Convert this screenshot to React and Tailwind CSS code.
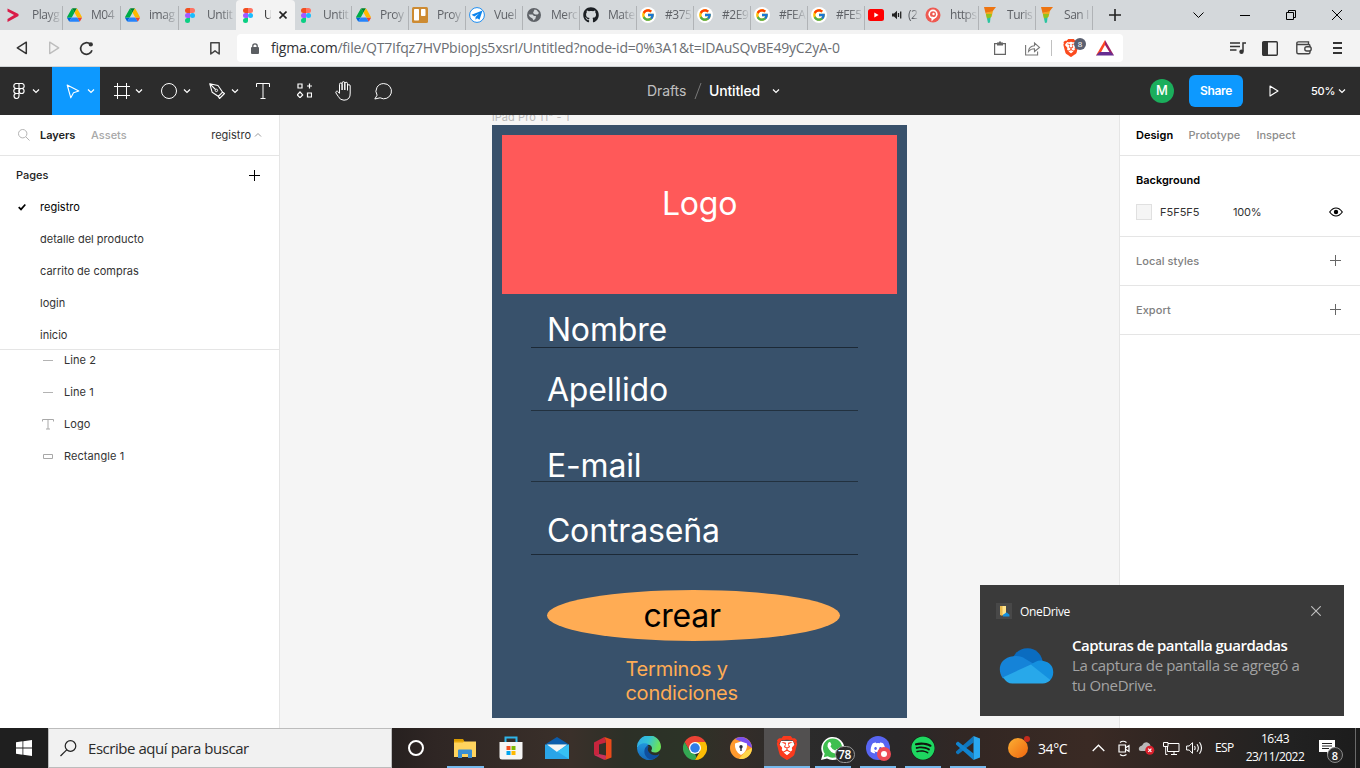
import React from "react";
import { FcGoogle } from "react-icons/fc";
import { FaGithub, FaSpotify, FaDiscord } from "react-icons/fa6";
import { SiBrave } from "react-icons/si";

/* ---------- small drawing helper ---------- */
function Svg({ w, h, className = "", children, box }) {
  return (
    <svg
      width={w}
      height={h}
      viewBox={box || `0 0 ${w} ${h}`}
      fill="none"
      stroke="none"
      className={"shrink-0 " + className}
    >
      {children}
    </svg>
  );
}

function Chevron({ className = "" }) {
  return (
    <Svg w={8} h={8} className={className}>
      <path d="M1 2.500 4 5.500 7 2.500" stroke="currentColor" strokeWidth="1.200" />
    </Svg>
  );
}

function Plus({ className = "" }) {
  return (
    <Svg w={11} h={11} className={className}>
      <path d="M5.500 0v11M0 5.500h11" stroke="currentColor" />
    </Svg>
  );
}

/* ---------- favicons ---------- */
const Platzi = () => (
  <Svg w={16} h={16}>
    <path d="M2.500 1.500v3l6.500 3.500-6.500 4v3l11-6V7z" fill="#d91c48" />
  </Svg>
);
const Drive = () => (
  <Svg w={15} h={14} box="0 0 87.3 78">
    <path fill="#0066da" d="m6.6 66.85 3.85 6.65c.8 1.4 1.95 2.5 3.3 3.3l13.75-23.8h-27.5c0 1.55.4 3.1 1.2 4.5z" />
    <path fill="#00ac47" d="m43.65 25-13.75-23.8c-1.35.8-2.5 1.9-3.3 3.3l-25.4 44a9.06 9.06 0 0 0-1.2 4.5h27.5z" />
    <path fill="#ea4335" d="m73.55 76.8c1.35-.8 2.5-1.9 3.3-3.3l1.6-2.75 7.65-13.25c.8-1.4 1.2-2.95 1.2-4.5h-27.502l5.852 11.5z" />
    <path fill="#00832d" d="m43.65 25 13.75-23.8c-1.35-.8-2.9-1.2-4.5-1.2h-18.5c-1.6 0-3.15.45-4.5 1.2z" />
    <path fill="#2684fc" d="m59.8 53h-32.3l-13.75 23.8c1.35.8 2.9 1.2 4.500 1.200h50.8c1.6 0 3.15-.45 4.5-1.2z" />
    <path fill="#ffba00" d="m73.4 26.5-12.7-22c-.8-1.4-1.95-2.5-3.3-3.3l-13.75 23.8 16.15 28h27.45c0-1.55-.4-3.1-1.2-4.5z" />
  </Svg>
);
const FigmaIcon = () => (
  <Svg w={10} h={15}>
    <path d="M2.500 0H5v5H2.500a2.500 2.500 0 0 1 0-5z" fill="#f24e1e" />
    <path d="M5 0h2.500a2.500 2.500 0 0 1 0 5H5z" fill="#ff7262" />
    <path d="M2.500 5H5v5H2.500a2.500 2.500 0 0 1 0-5z" fill="#a259ff" />
    <circle cx="7.5" cy="7.5" r="2.500" fill="#1abcfe" />
    <path d="M2.500 10H5v2.500A2.500 2.500 0 1 1 2.500 10z" fill="#0acf83" />
  </Svg>
);
const Trello = () => (
  <Svg w={16} h={16}>
    <rect width="16" height="16" rx="1.500" fill="#cd8b32" />
    <rect x="2" y="2" width="5" height="11.500" rx=".7" fill="#fff" />
    <rect x="9" y="2" width="4.500" height="7" rx=".7" fill="#fff" />
  </Svg>
);
const Plane = () => (
  <Svg w={16} h={16}>
    <circle cx="8" cy="8" r="7.400" fill="#fff" stroke="#1c8cf0" />
    <path d="M13.500 3.500 2.500 7.800l2.800 1.600 4.700-3-3.500 3.600v2.800l1.600-1.500 2.400 1.500z" fill="#0b84ee" />
  </Svg>
);
const Globe = () => (
  <Svg w={14} h={14}>
    <circle cx="7" cy="7" r="7" fill="#5f6368" />
    <path d="M7.500 1.500 9.500 2 12 5 10.500 6.500H8L6 5zM1.500 6.500H5.500l1.500 1.500h2L8.500 10.500 6.500 12.500 5.500 10.500 3 9z" fill="#d4d8db" />
  </Svg>
);
const Google = () => (
  <span className="flex size-4 shrink-0 items-center justify-center rounded-full bg-white">
    <FcGoogle size={14} />
  </span>
);
const Youtube = () => (
  <Svg w={16} h={12}>
    <rect width="16" height="12" rx="2.500" fill="#f00" />
    <path d="M6.300 3.500v5L10.600 6z" fill="#fff" />
  </Svg>
);
const Pin = () => (
  <Svg w={16} h={16}>
    <circle cx="8" cy="8" r="7.500" fill="#ee5a52" />
    <circle cx="8" cy="7.200" r="4.600" fill="#fff" />
    <circle cx="8" cy="7.200" r="3" fill="#ee5a52" />
    <circle cx="8.500" cy="7" r="1.200" fill="#fff" />
    <path d="M6.500 9.500v5l4-4z" fill="#fff" />
  </Svg>
);
const Funnel = () => (
  <Svg w={12} h={16}>
    <path d="M0 0h12L8 5 1.500 6z" fill="#ee7410" />
    <path d="M1.500 6 9 4 7.500 10 3 11z" fill="#f2a71b" />
    <path d="M2 7h6l-1.500 4-3.500 1z" fill="#8fc31f" />
    <path d="M3 11.500 6.500 10.500 6 15.500 4 16z" fill="#2bc4a0" />
  </Svg>
);

const TABS_LEFT = [
  { icon: <Drive />, label: "M04", wide: true },
  { icon: <Drive />, label: "imag", wide: true },
  { icon: <FigmaIcon />, label: "Untit", last: true },
];
const TABS_RIGHT = [
  { icon: <FigmaIcon />, label: "Untit" },
  { icon: <Drive />, label: "Proy" },
  { icon: <Trello />, label: "Proy" },
  { icon: <Plane />, label: "Vuel" },
  { icon: <Globe />, label: "Merc" },
  { icon: <FaGithub size={16} color="#1b1f23" />, label: "Mate" },
  { icon: <Google />, label: "#375" },
  { icon: <Google />, label: "#2E9" },
  { icon: <Google />, label: "#FEA" },
  { icon: <Google />, label: "#FE5" },
  { icon: <Youtube />, label: "(2", audio: true },
  { icon: <Pin />, label: "https" },
  { icon: <Funnel />, label: "Turis" },
  { icon: <Funnel />, label: "San I" },
];

function Tab({ icon, label, audio, wide, last, first }) {
  const width = first ? "w-[63px] pl-[5px]" : wide ? "w-[58px] pl-[3px]" : "w-[57px] pl-[3px]";
  return (
    <div className={"flex h-[30px] shrink-0 items-center " + width}>
      <span className="flex w-4 shrink-0 justify-center">{icon}</span>
      {audio && (
        <Svg w={10} h={10} className="ml-2">
          <path d="M0 3.500h2L5 .8v8.400L2 6.500H0z" fill="#222" />
          <path d="M6.500 3v4M8.700 1.500v7" stroke="#222" strokeWidth="1.300" />
        </Svg>
      )}
      <span
        className={
          "flex-1 text-[12px] leading-[20px] tracking-[-0.45px] whitespace-nowrap text-[#5e6166] [mask-image:linear-gradient(90deg,#000_50%,transparent_105%)] " +
          (audio ? "ml-1.5 mr-1.5" : first ? "ml-[11px] mr-px" : "ml-[9px] mr-px")
        }
      >
        {label}
      </span>
      {!last && <span className="h-6 w-px self-end bg-[#b0b3b6]" />}
    </div>
  );
}

function TabStrip() {
  return (
    <div className="flex h-[30px] items-center bg-[#d4d8db]">
      <Tab first icon={<Platzi />} label="Playg" />
      {TABS_LEFT.map((t, i) => (
        <Tab key={i} {...t} />
      ))}
      <div className="flex h-[30px] w-[59px] shrink-0 items-center rounded-t-[4px] bg-[#f3f3f3] pl-1">
        <span className="flex w-4 justify-center">
          <FigmaIcon />
        </span>
        <span className="ml-2 w-[7px] text-[12px] leading-[20px] tracking-[-1px] text-[#333] [mask-image:linear-gradient(90deg,#000_50%,transparent_110%)]">
          U
        </span>
        <Svg w={8} h={8} className="ml-2">
          <path d="M.5.5l7 7M7.500.5l-7 7" stroke="#222" strokeWidth="1.600" />
        </Svg>
      </div>
      {TABS_RIGHT.map((t, i) => (
        <Tab key={i} {...t} />
      ))}
      <Svg w={12} h={12} className="ml-[16px]">
        <path d="M6 0v12M0 6h12" stroke="#222" strokeWidth="1.600" />
      </Svg>
      <div className="ml-auto flex items-center pr-[18px] text-black">
        <Svg w={11} h={7} className="mr-[36px]">
          <path d="M.5.5l5 5 5-5" stroke="currentColor" />
        </Svg>
        <Svg w={10} h={1} className="mr-[36px]">
          <path d="M0 .5h10" stroke="currentColor" />
        </Svg>
        <Svg w={10} h={10} className="mr-[36px]">
          <path d="M.5 2.500h7v7h-7zM2.500 2.500v-2h7v7h-2" stroke="currentColor" />
        </Svg>
        <Svg w={10} h={10}>
          <path d="M0 0l10 10M10 0L0 10" stroke="currentColor" />
        </Svg>
      </div>
    </div>
  );
}

function AddressBar() {
  return (
    <div className="flex h-[37px] items-center border-b border-[#cfd3d5] bg-[#f3f3f3]">
      <Svg w={12} h={14} className="ml-4">
        <path d="M10.300 1.200v11.400L1.300 6.900z" stroke="#333" strokeWidth="1.500" strokeLinejoin="round" />
      </Svg>
      <Svg w={12} h={14} className="ml-[20px]">
        <path d="M1.700 1.200v11.400l9-5.700z" stroke="#bdbdbd" strokeWidth="1.400" strokeLinejoin="round" />
      </Svg>
      <Svg w={15} h={15} className="ml-[19px]">
        <path d="M11.300 3.200A5.800 5.800 0 1 0 13 9.200" stroke="#333" strokeWidth="1.700" />
        <circle cx="11.800" cy="3.400" r="2.100" fill="#333" />
      </Svg>
      <Svg w={10} h={13} className="ml-[116px]">
        <path d="M.8.8h8.400v11.200L5 8.800.8 12z" stroke="#444" strokeWidth="1.500" strokeLinejoin="round" />
      </Svg>
      <div className="ml-[17px] flex h-7 w-[886px] items-center rounded bg-white">
        <Svg w={8} h={11} className="ml-[14px]">
          <rect y="4" width="8" height="7" rx="1" fill="#5b5e62" />
          <path d="M1.800 5V3a2.200 2.200 0 0 1 4.400 0v2" stroke="#5b5e62" strokeWidth="1.300" />
        </Svg>
        <div className="ml-3 w-[570px] text-[14px] leading-5 tracking-[-0.215px] whitespace-nowrap text-[#6b6e73]">
          <span className="text-[#303235]">figma.com</span>
          /file/QT7Ifqz7HVPbiopJs5xsrI/Untitled?node-id=0%3A1&amp;t=IDAuSQvBE49yC2yA-0
        </div>
        <Svg w={12} h={14} className="ml-[153px]">
          <path d="M.6 2.600h10.800v10.800H.6z" stroke="#666" strokeWidth="1.200" />
          <path d="M3 1.500h1.500L6 0l1.500 1.500H9v3H3z" fill="#666" />
        </Svg>
        <Svg w={16} h={15} className="ml-[19px]">
          <path d="M.6 4V14h12V10.500M3.500 10.500c.3-4 2.800-5.700 6-5.800V2l5 4.400-5 4.100V7.800c-2.500 0-4.500.8-6 2.700z" stroke="#777" strokeWidth="1.100" />
        </Svg>
        <span className="ml-[10px] h-4 w-px bg-[#c0c0c0]" />
        <span className="relative ml-[10px] flex">
          <svg width="18" height="18" viewBox="0 0 18 18">
            <path d="M4 4h10l1 3-2.500 7-3.500 2.500L5.500 14 3 7z" fill="#fff" />
          </svg>
          <span className="absolute inset-0 flex items-center justify-center">
            <SiBrave size={18} color="#fb4a1d" />
          </span>
          <span className="absolute top-[-1px] left-[12px] flex size-3 items-center justify-center rounded-full bg-[#5b6070] text-[8px] leading-none text-white">
            8
          </span>
        </span>
        <Svg w={18} h={16} className="ml-[16px]">
          <path d="M9 0 0 15.500l4-1.500 5-9z" fill="#ff4724" />
          <path d="M9 0v5l5 8 4 2.500z" fill="#9e1f63" />
          <path d="M0 15.500 3.500 12h11l3.500 3.500z" fill="#662d91" />
        </Svg>
      </div>
      <div className="ml-auto flex items-center pr-[17px]">
        <Svg w={16} h={14} className="mr-4">
          <path d="M0 2h10M0 5.500h10M0 9h6.500" stroke="#333" strokeWidth="1.500" />
          <path d="M13 10.500V2h3" stroke="#333" strokeWidth="1.500" />
          <circle cx="11.500" cy="10.700" r="2.200" fill="#333" />
        </Svg>
        <Svg w={16} h={15} className="mr-[18px]">
          <rect x=".7" y=".7" width="14.600" height="13.600" rx="1" stroke="#333" strokeWidth="1.400" />
          <path d="M1 1h5v13H1z" fill="#333" />
        </Svg>
        <Svg w={16} h={14} className="mr-[21px]">
          <path d="M.8 2.500v8.800q0 1.500 1.500 1.500h10.200q1.500 0 1.500-1.500V5q0-1.500-1.500-1.500H2Q.8 3.500.8 2.200.8.9 2.300.9H12.500V3" stroke="#444" strokeWidth="1.400" />
          <rect x="8.800" y="5.800" width="6.400" height="4.200" rx="2" fill="#f3f3f3" stroke="#444" strokeWidth="1.400" />
        </Svg>
        <Svg w={10} h={12}>
          <path d="M0 1h9M0 6h9M0 11h9" stroke="#333" strokeWidth="1.800" />
        </Svg>
      </div>
    </div>
  );
}

function FigmaToolbar() {
  return (
    <div className="flex h-12 items-center bg-[#2c2c2c] text-white">
      <div className="flex w-[52px] items-center pl-[13px]">
        <Svg w={12} h={16}>
          <path d="M6 .5H3.300a2.500 2.500 0 0 0 0 5H6zM6 .5h2.700a2.500 2.500 0 0 1 0 5H6zM6 5.500H3.300a2.500 2.500 0 0 0 0 5H6zM6 10.500H3.300A2.500 2.500 0 1 0 6 13z" stroke="currentColor" strokeWidth="1.150" />
          <circle cx="8.600" cy="8" r="2.500" stroke="currentColor" strokeWidth="1.150" />
        </Svg>
        <Chevron className="ml-[7px]" />
      </div>
      <div className="flex h-12 w-12 items-center bg-[#0d99ff] pl-[14px]">
        <Svg w={14} h={15}>
          <path d="M1.200 1 12.800 7 7.500 8.800 4.800 13.800z" stroke="currentColor" strokeWidth="1.100" strokeLinejoin="round" />
        </Svg>
        <Chevron className="ml-[7px]" />
      </div>
      <div className="flex w-[47px] items-center pl-[14px]">
        <Svg w={16} h={16}>
          <path d="M3.500 0v16M12.500 0v16M0 3.500h16M0 12.500h16" stroke="currentColor" />
        </Svg>
        <Chevron className="ml-[5px]" />
      </div>
      <div className="flex w-12 items-center pl-[14px]">
        <Svg w={16} h={16}>
          <circle cx="8" cy="8" r="7.500" stroke="currentColor" />
        </Svg>
        <Chevron className="ml-[6px]" />
      </div>
      <div className="flex w-12 items-center pl-[14px]">
        <Svg w={16} h={16}>
          <path d="M.7.7 9 2.500 13.500 9 9.500 13.500 3.200 9.300zM.7.7 6.500 6.500M15.500 10.500l-5 5-1.200-2 4.300-4.300z" stroke="currentColor" strokeWidth="1.100" strokeLinejoin="round" />
          <circle cx="7.400" cy="7.400" r="1.200" stroke="currentColor" />
        </Svg>
        <Chevron className="ml-[6px]" />
      </div>
      <Svg w={14} h={16} className="ml-[13px]">
        <path d="M.5 4V.5h13V4M7 .5v15M4.500 15.500h5" stroke="currentColor" />
      </Svg>
      <Svg w={15} h={15} className="-mt-px ml-[27px]">
        <path d="M1 1h4v4H1zM10.500 10h4v4h-4zM12.500.5v5M10 3h5M3 9 5.700 11.900 3 14.700.3 11.900z" stroke="currentColor" strokeWidth="1.200" />
      </Svg>
      <Svg w={18} h={20} className="ml-[23px]">
        <path
          d="M4.500 12V3.300a1.300 1.300 0 0 1 2.600 0V9M7.100 9V2a1.300 1.300 0 0 1 2.700 0v7M9.800 9V2.600a1.300 1.300 0 0 1 2.700 0V9.500M12.500 5a1.300 1.300 0 0 1 2.700 0v7q.3 7-6.200 7.200-4 0-5.700-3.700L.9 11.900Q.5 10.500 1.700 10.200q1-.2 1.700.8l1.100 1.600"
          stroke="currentColor"
          strokeLinejoin="round"
        />
      </Svg>
      <Svg w={18} h={17} className="ml-[21px]">
        <path d="M9.800.6a7.600 7.600 0 1 1-3.700 14.200L.8 16l2.300-3.800A7.600 7.600 0 0 1 9.800.6z" stroke="currentColor" strokeLinejoin="round" />
      </Svg>
      <div className="ml-[255px] flex items-center pb-px text-[14px] tracking-[-0.1px]">
        <span className="w-10 whitespace-nowrap text-[#c0c0c0]">Drafts</span>
        <Svg w={8} h={16} className="ml-[7px]">
          <path d="M7 0 1 16" stroke="#7a7a7a" />
        </Svg>
        <span className="ml-[7px] w-[54px] font-medium whitespace-nowrap tracking-[-0.150px]">Untitled</span>
        <Chevron className="mt-px ml-[9px]" />
      </div>
      <div className="ml-auto flex items-center pr-[14px]">
        <span className="flex size-6 items-center justify-center rounded-full bg-[#1bae5c] text-[13px] font-medium">M</span>
        <span className="ml-[15px] flex h-8 w-[54px] items-center justify-center rounded-[6px] bg-[#0d99ff] text-[12px] font-semibold tracking-[-0.350px]">
          Share
        </span>
        <Svg w={10} h={12} className="ml-[26px]">
          <path d="M1 1v10l8-5z" stroke="currentColor" strokeWidth="1.100" strokeLinejoin="round" />
        </Svg>
        <span className="ml-[32px] w-[23px] text-[11px] font-medium tracking-[-0.2px] whitespace-nowrap">50%</span>
        <Chevron className="ml-1" />
      </div>
    </div>
  );
}

/* ---------- left panel ---------- */
const PAGES = ["registro", "detalle del producto", "carrito de compras", "login", "inicio"];
const LineGlyph = () => (
  <Svg w={12} h={12}>
    <path d="M1 6.500h10" stroke="#b3b3b3" />
  </Svg>
);
const LAYERS = [
  { name: "Line 2", icon: <LineGlyph /> },
  { name: "Line 1", icon: <LineGlyph /> },
  {
    name: "Logo",
    icon: (
      <Svg w={12} h={12}>
        <path d="M.5 3.500v-2h11v2M6 1.500v9.500M4 11h4" stroke="#a8a8a8" />
      </Svg>
    ),
  },
  {
    name: "Rectangle 1",
    icon: (
      <Svg w={12} h={12}>
        <path d="M1.500 4.500h9v4h-9z" stroke="#a8a8a8" />
      </Svg>
    ),
  },
];

function LeftPanel() {
  return (
    <div className="flex w-[280px] shrink-0 flex-col border-r border-[#e5e5e5] bg-white text-[11px] tracking-[0.01px] text-[#333]">
      <div className="flex h-[41px] items-center border-b border-[#e5e5e5] pr-[17px] pl-[18px]">
        <Svg w={12} h={12}>
          <circle cx="4.700" cy="4.700" r="4.200" stroke="#b3b3b3" />
          <path d="M7.800 7.800l3.700 3.700" stroke="#b3b3b3" />
        </Svg>
        <span className="ml-[10px] w-[51px] font-semibold tracking-[-0.05px] text-[#222]">Layers</span>
        <span className="font-medium text-[#a8a8a8]">Assets</span>
        <span className="ml-auto">registro</span>
        <Svg w={8} h={8} className="ml-[3px]">
          <path d="M1 5.500 4 2.500 7 5.500" stroke="#999" />
        </Svg>
      </div>
      <div className="flex h-[194px] flex-col overflow-hidden border-b border-[#e5e5e5]">
        <div className="flex h-[35px] shrink-0 items-center justify-between pt-[3px] pr-[19px] pl-4">
          <span className="font-medium text-[#222]">Pages</span>
          <Plus className="text-black" />
        </div>
        {PAGES.map((p, i) => (
          <div key={p} className="flex h-8 shrink-0 items-center pl-[18px]">
            <span className="w-[22px]">
              {i === 0 && (
                <Svg w={8} h={8}>
                  <path d="M.7 4.200 3 6.400 7.300 1.500" stroke="#000" strokeWidth="1.700" />
                </Svg>
              )}
            </span>
            <span className={i === 0 ? "text-black" : ""}>{p}</span>
          </div>
        ))}
      </div>
      <div className="-mt-[6px] flex flex-col">
        {LAYERS.map((l) => (
          <div key={l.name} className="flex h-8 items-center pl-[42px]">
            {l.icon}
            <span className="ml-[10px] tracking-[0.08px]">{l.name}</span>
          </div>
        ))}
      </div>
    </div>
  );
}

/* ---------- canvas: nodes sit at free coordinates ---------- */
function Canvas() {
  return (
    <div className="relative flex-1 overflow-hidden bg-[#f5f5f5]">
      <span className="absolute top-[-6px] left-[212px] text-[11px] leading-4 tracking-[0.08px] whitespace-nowrap text-[#b8b8b8]">
        iPad Pro 11" - 1
      </span>
      <div className="absolute top-[10px] left-[212.400px] h-[593px] w-[414.400px] bg-[#38516b] text-[32px] leading-[39px] tracking-[-0.15px] whitespace-nowrap text-white">
        <div className="absolute top-[10px] left-[9.600px] h-[159.400px] w-[395px] bg-[#ff5959]" />
        <span className="absolute top-[59px] left-[169.500px]">Logo</span>
        <span className="absolute top-[185px] left-[54.500px]">Nombre</span>
        <span className="absolute top-[244.500px] left-[54.500px]">Apellido</span>
        <span className="absolute top-[321px] left-[54.500px]">E-mail</span>
        <span className="absolute top-[386px] left-[54.500px]">Contraseña</span>
        <div className="absolute top-[222px] left-[38.500px] h-px w-[327px] bg-[#1c2936]" />
        <div className="absolute top-[285px] left-[38.500px] h-px w-[327px] bg-[#22313f]" />
        <div className="absolute top-[356px] left-[38.500px] h-px w-[327px] bg-[#22313f]" />
        <div className="absolute top-[429px] left-[38.500px] h-px w-[327px] bg-[#1c2936]" />
        <div className="absolute top-[465px] left-[54.500px] h-[51px] w-[293px] rounded-[50%] bg-[#ffac54]" />
        <span className="absolute top-[471px] left-[151px] tracking-[-0.3px] text-black">crear</span>
        <span className="absolute top-[532px] left-[133px] text-[20px] leading-6 tracking-[-0.2px] text-[#ffac54]">
          Terminos y
          <br />
          condiciones
        </span>
      </div>
    </div>
  );
}

/* ---------- right panel ---------- */
function RightPanel() {
  return (
    <div className="w-[241px] shrink-0 border-l border-[#e5e5e5] bg-white text-[11px] text-[#333]">
      <div className="flex h-[41px] items-center gap-4 border-b border-[#e5e5e5] px-4 font-medium text-[#8c8c8c]">
        <span className="w-9 font-semibold tracking-[0.03px] text-black">Design</span>
        <span className="ml-[0.5px] w-[52px] tracking-[0.02px]">Prototype</span>
        <span>Inspect</span>
      </div>
      <div className="h-[81px] border-b border-[#e5e5e5] px-4 pt-2">
        <div className="flex h-8 items-center font-semibold text-black">Background</div>
        <div className="flex h-8 items-center">
          <span className="size-4 border border-[#e0e0e0] bg-[#f5f5f5]" />
          <span className="ml-2 w-[73px]">F5F5F5</span>
          <span className="tracking-[-0.2px]">100%</span>
          <Svg w={14} h={10} className="ml-auto mr-px">
            <path d="M.7 5Q3.500 1 7 1t6.300 4Q10.500 9 7 9T.7 5z" stroke="#000" strokeWidth="1.200" />
            <circle cx="7" cy="5" r="2.200" fill="#000" />
          </Svg>
        </div>
      </div>
      {["Local styles", "Export"].map((t) => (
        <div key={t} className="flex h-[49px] items-center justify-between border-b border-[#e5e5e5] pr-[19px] pl-4 font-medium tracking-[0.05px] text-[#808080]">
          {t}
          <Plus className="mb-px text-[#666]" />
        </div>
      ))}
    </div>
  );
}

/* ---------- notification ---------- */
function OneDriveCloud({ w, h }) {
  return (
    <Svg w={w} h={h} box="0 0 55 37">
      <path d="M14 9C17 3 23 0 29 .3c7.500.4 13 5 15 12.700L30 24 12 14z" fill="#0a6cc0" />
      <path d="M14 8.500c5-.8 9 .5 12 2.500l17 10-20 12-20-2C-3 22 0 10 14 8.500z" fill="#1583d8" />
      <path d="M32 17c4-3 8-5 12-4 8 1.500 11 6 11 12 0 4-1.500 7-4 9z" fill="#1490df" />
      <path d="M3.500 30 32 17l20 16q-3 3.500-8 3.500H13q-6 0-9.500-6.500z" fill="#28a8ea" />
    </Svg>
  );
}

function Toast() {
  return (
    <div className="absolute top-[585px] left-[980px] h-[131px] w-[364px] bg-[#3a3a3a] pt-[15px] pl-4 font-['Open_Sans','Noto_Sans',sans-serif] text-white">
      <div className="flex h-[22px] items-center">
        <span className="flex size-4 items-center justify-center bg-[#484848]">
          <Svg w={12} h={12}>
            <path d="M2 1h6v9H2z" fill="#ffe28a" />
            <path d="M2 1h2.500v10L2 10z" fill="#e8b84a" />
            <path d="M5 11.500q-.5-2.500 2-3 1.500-2 3 0 2 .5 1.500 3z" fill="#1490df" />
          </Svg>
        </span>
        <span className="ml-2 pt-px text-[12px] tracking-[-0.35px]">OneDrive</span>
        <Svg w={10} h={10} className="ml-auto mr-[23px]">
          <path d="M.3.3l9.400 9.400M9.700.3.3 9.700" stroke="#c0c0c0" strokeWidth="1.100" />
        </Svg>
      </div>
      <div className="flex pt-[13px]">
        <span className="mt-[13px] ml-[2.500px] flex">
          <OneDriveCloud w={55} h={36} />
        </span>
        <div className="ml-[18.500px] text-[15px] leading-5 whitespace-nowrap">
          <div className="font-semibold tracking-[-0.52px]">Capturas de pantalla guardadas</div>
          <div className="tracking-[-0.35px] text-[#a3a3a3]">
            La captura de pantalla se agregó a<br />
            tu OneDrive.
          </div>
        </div>
      </div>
    </div>
  );
}

/* ---------- taskbar ---------- */
const Explorer = () => (
  <Svg w={22} h={19}>
    <path d="M0 0h9l1.500 2.500H0z" fill="#d99b00" />
    <path d="M0 2.500h22V18H0z" fill="#ffd45e" />
    <path d="M0 3.500h9l1.500-1.500H0z" fill="#e9a90c" />
    <path d="M4 19v-7.500q0-1 1-1h12q1 0 1 1V19h-4v-4H8v4z" fill="#3b8fd1" />
  </Svg>
);
const Store = () => (
  <Svg w={24} h={24}>
    <path d="M6.500 6V1.500h11V6" stroke="#2fb5ea" strokeWidth="2" />
    <path d="M.5 6h23v15q0 2.500-2.500 2.500H3Q.5 23.500.5 21z" fill="#f5f5f5" />
    <path d="M7.500 10h4v4h-4z" fill="#f25022" />
    <path d="M12.500 10h4v4h-4z" fill="#7fba00" />
    <path d="M7.500 15h4v4h-4z" fill="#00a4ef" />
    <path d="M12.500 15h4v4h-4z" fill="#ffb900" />
  </Svg>
);
const Mail = () => (
  <Svg w={24} h={22}>
    <path d="M0 7.500 12 0l12 7.500z" fill="#0b5cab" />
    <path d="M0 7.500h24V22H0z" fill="#2aa5e8" />
    <path d="M2 7.500h20L12 15z" fill="#f4f4f4" />
    <path d="M24 7.500V22L9 12.500l3 2z" fill="#36c0f4" />
  </Svg>
);
const Office = () => (
  <Svg w={18} h={23}>
    <path d="M0 5.500 10.500 0 12 5.500 5 7.500v9.500L1 19 0 17z" fill="#c8253d" />
    <path d="M10.500 0 17.500 2.500v18L11 23l1-4V5z" fill="#ea4a1a" />
    <path d="M1 18.500 5 17l7 1.500V21l-1.500 2z" fill="#c8325a" />
  </Svg>
);
const Edge = () => (
  <Svg w={24} h={24}>
    <defs>
      <linearGradient id="edgeTop" x1="0" y1="0" x2="1" y2=".3">
        <stop offset="0" stopColor="#2fa9e8" />
        <stop offset=".5" stopColor="#33c1d8" />
        <stop offset="1" stopColor="#6be35a" />
      </linearGradient>
      <linearGradient id="edgeLeft" x1="0" y1="0" x2="0" y2="1">
        <stop offset="0" stopColor="#2196dc" />
        <stop offset="1" stopColor="#1668b8" />
      </linearGradient>
    </defs>
    <path d="M0 12A12 12 0 0 1 24 10.500c0 4-3 6-6.200 6-3 0-4-1.200-3.300-2.400 1.200-1.800.3-5.300-3.300-5.300C7 8 3 8.500 0 12z" fill="url(#edgeTop)" />
    <path d="M0 12.500C1.500 7.500 8 6 12 8.500c-4 2-3.500 8 .5 10.500 3.200 2 7 1.200 9.800-.8A12 12 0 0 1 0 12.500z" fill="url(#edgeLeft)" />
    <path d="M10.500 9.800c-4.500 2.500-4.500 10 2 13.500 4 .8 8-2 9.800-5-3.300 1.600-8 1-10.300-2-1.600-2-1.500-4.200-.2-5.700z" fill="#0f4f9e" />
  </Svg>
);
const Chrome = () => (
  <Svg w={24} h={24} box="0 0 48 48">
    <path d="M3.200 12A24 24 0 0 1 44.800 12H24L13.600 30z" fill="#ea4335" />
    <path d="M3.200 12 13.600 30 24 36l3 6-3 6A24 24 0 0 1 3.200 12z" fill="#34a853" />
    <path d="M44.800 12H24L34.400 30 24 48A24 24 0 0 0 44.800 12z" fill="#fbbc05" />
    <circle cx="24" cy="24" r="12" fill="#fff" />
    <circle cx="24" cy="24" r="9.500" fill="#2f7de9" />
  </Svg>
);
const PrivateBrowser = () => (
  <Svg w={22} h={22}>
    <circle cx="11" cy="11" r="11" fill="#ff9a2e" />
    <path d="M5 2a11 11 0 0 1 17 9l-8-5z" fill="#7b4ff0" />
    <path d="M22 11a11 11 0 0 1-13 10.800L16 14z" fill="#ffd84a" />
    <path d="M11 4.500 17 6.500q.8 8-6 11.500-6.800-3.500-6-11.500z" fill="#fff" />
    <circle cx="11" cy="9.800" r="1.700" fill="#2b2b3a" />
    <path d="M10.300 10h1.400v4h-1.400z" fill="#2b2b3a" />
  </Svg>
);
const VsCode = () => (
  <Svg w={24} h={24}>
    <path d="M17.500 0 0 15.500V17l2 1.500L17.500 6.500z" fill="#0f76bd" />
    <path d="M2 5.500 0 7v1.500L17.500 24V17.500z" fill="#1184cf" />
    <path d="M17.500 0 24 2.500v19L17.500 24z" fill="#29a8f0" />
  </Svg>
);

function BraveMark() {
  return (
    <span className="relative flex">
      <svg width="24" height="24" viewBox="0 0 24 24">
        <path d="M6 5h12l1.500 4-3 10-4.500 3-4.500-3-3-10z" fill="#fff" />
      </svg>
      <span className="absolute inset-0 flex items-center justify-center">
        <SiBrave size={24} color="#fb3a1d" />
      </span>
    </span>
  );
}

const APPS = [
  { icon: <Explorer />, open: true },
  { icon: <Store /> },
  { icon: <Mail /> },
  { icon: <Office /> },
  { icon: <Edge /> },
  { icon: <Chrome /> },
  { icon: <PrivateBrowser /> },
  { icon: <BraveMark />, active: true },
];

const WIN_APPS = [
  <span className="relative flex">
    <Svg w={24} h={24}>
      <path d="M0 24l1.700-6A11.500 11.500 0 1 1 6 22.400z" fill="#fff" />
      <path d="M2.700 21.300l1-3.800a9.600 9.600 0 1 1 3 2.800z" fill="#3fbf4f" />
      <path d="M7.800 6.300q1.300-.9 1.800.4l.8 1.900q0 .6-1 1.700 1.500 3 4.800 4.300l1.500-1.600 3 1.500q0 3-3.500 3.200Q9 17 6.500 10.500q-.2-2.800 1.300-4.200z" fill="#fff" />
    </Svg>
    <span className="absolute top-[10px] left-[14px] flex h-[17px] w-[20px] items-center justify-center rounded-full border border-[#9a9a9a] bg-[#2b2b2b] font-['Open_Sans',sans-serif] text-[12px] leading-none font-semibold tracking-[-0.3px] text-white">
      78
    </span>
  </span>,
  <span className="relative flex size-6 items-center justify-center rounded-full bg-[#5865f2]">
    <FaDiscord size={16} color="#fff" />
    <span className="absolute top-[11px] left-[11px] flex size-[14px] items-center justify-center rounded-full bg-[#ed4a55]">
      <span className="size-[6px] rounded-full bg-white" />
    </span>
  </span>,
  <span className="flex rounded-full bg-[#10160f]">
    <FaSpotify size={24} color="#1ed760" />
  </span>,
  <VsCode />,
];

function Taskbar() {
  return (
    <div className="flex h-10 items-center bg-[linear-gradient(90deg,#1f1f1f_0%,#241f1e_28%,#2f2624_32%,#3a302a_42%,#2c3027_46%,#2c3327_50%,#342d28_54%,#2b2b2b_59%,#2a2829_66%,#332723_72%,#3a2a24_80%,#2e2522_87%,#222_94%,#1c1c1c_100%)] font-['Open_Sans','Noto_Sans',sans-serif] text-white">
      <div className="flex h-10 w-12 items-center justify-center bg-[#1f1f1f]">
        <Svg w={16} h={16}>
          <path d="M0 2.200 6.500 1.300V7.600H0zM7.300 1.200 16 0v7.600H7.300zM0 8.400h6.500v6.300L0 13.800zM7.300 8.400H16V16l-8.700-1.200z" fill="#fff" />
        </Svg>
      </div>
      <div className="flex h-10 w-[344px] items-center border border-[#bcbcbc] bg-[#f1f1f1] pl-[11px]">
        <Svg w={17} h={17}>
          <circle cx="10.500" cy="6" r="5.300" stroke="#222" strokeWidth="1.200" />
          <path d="M6.700 9.800.5 16" stroke="#222" strokeWidth="1.200" />
        </Svg>
        <span className="ml-[11px] text-[15px] tracking-[-0.45px] text-[#2b2b2b]">Escribe aquí para buscar</span>
      </div>
      <div className="flex w-[50px] justify-center pr-[2px]">
        <span className="size-4 rounded-full border-2 border-white" />
      </div>
      {APPS.map((a, i) => (
        <div
          key={i}
          className={"flex h-10 w-[46px] flex-col items-center " + (a.active ? "bg-[#525050]" : "")}
        >
          <span className="flex h-[38px] items-center pt-[2px]">{a.icon}</span>
          {a.open && <span className="h-[2px] w-[37px] bg-[#76b9ed]" />}
          {a.active && <span className="h-[2px] w-full bg-[#76b9ed]" />}
        </div>
      ))}
      {WIN_APPS.map((icon, i) => (
        <div key={i} className="flex h-10 w-[45px] flex-col items-center">
          <span className="flex h-[38px] items-center pt-[2px]">{icon}</span>
          <span className="h-[2px] w-[36px] bg-[#76b9ed]" />
        </div>
      ))}
      <Svg w={22} h={24} className="-mt-[2px] ml-[18px]">
        <defs>
          <linearGradient id="sun" x1="0" y1="0" x2="1" y2="1">
            <stop offset="0" stopColor="#fbb034" />
            <stop offset="1" stopColor="#f0650e" />
          </linearGradient>
        </defs>
        <circle cx="10" cy="13" r="10" fill="url(#sun)" />
        <circle cx="19" cy="4" r="3" fill="#c42b1c" />
      </Svg>
      <span className="ml-2 w-[54px] text-[14px] tracking-[-0.4px]">34°C</span>
      <Svg w={13} h={8}>
        <path d="M.7 7 6.500 1.200 12.300 7" stroke="#fff" strokeWidth="1.300" />
      </Svg>
      <Svg w={12} h={17} className="ml-[13px]">
        <path d="M1 5h6.500v7H1zM8 7.500l3-2v6l-3-2M2 2.500Q5 0 8.500 2.500M2 14.500q3 2.500 6.500 0" stroke="#fff" strokeWidth="1.200" />
      </Svg>
      <Svg w={17} h={14} className="ml-[8px]">
        <path d="M1 9Q0 5.500 4 4.500 6 .5 9.500 1.500q3 1 3 4V10H3Q1.500 10 1 9z" fill="#b8b8b8" />
        <circle cx="11.800" cy="9.300" r="4.500" fill="#d9202c" />
        <path d="M10.200 7.700l3.200 3.200M13.400 7.700l-3.200 3.200" stroke="#fff" strokeWidth="1.200" />
      </Svg>
      <Svg w={17} h={15} className="ml-[8px]">
        <path d="M5 2.500h11v8H4.500V6M8 13.500h6M11 10.500v3M.5 1.500h4.500v4H.5zM2.700 5.500v8H4.500" stroke="#fff" />
      </Svg>
      <Svg w={18} h={14} className="ml-[6px]">
        <path d="M.6 5h2.500L6.500 1.700v10.600L3.100 9H.6z" stroke="#fff" strokeLinejoin="round" />
        <path d="M8.500 5q1.300 2 0 4M11 3.200q2.700 3.800 0 7.600M13.500 1.300q4 5.700 0 11.400" stroke="#fff" strokeWidth="1.100" />
      </Svg>
      <span className="ml-[11px] w-[19px] text-[12px] tracking-[-0.6px]">ESP</span>
      <div className="ml-[10px] w-[62px] text-center text-[12px] leading-[18px] tracking-[-0.5px] whitespace-nowrap">
        <div>16:43</div>
        <div>23/11/2022</div>
      </div>
      <div className="relative ml-[13px]">
        <Svg w={17} h={16}>
          <path d="M0 0h16v12h-5l-3 3v-3H0z" fill="#fff" />
          <path d="M3 3.500h10M3 6h10M3 8.500h7" stroke="#222" />
        </Svg>
        <span className="absolute top-[7px] left-[8px] flex size-4 items-center justify-center rounded-full border border-[#8a8a8a] bg-[#2b2b2b] text-[11px] leading-none font-semibold">
          8
        </span>
      </div>
      <span className="ml-auto mr-1 h-10 w-px bg-[#6a6a6a]" />
    </div>
  );
}

export default function App() {
  return (
    <div className="relative flex h-[768px] w-[1360px] flex-col overflow-hidden font-[Inter,sans-serif]">
      <div className="font-['Open_Sans','Noto_Sans',sans-serif]">
        <TabStrip />
        <AddressBar />
      </div>
      <FigmaToolbar />
      <div className="flex min-h-0 flex-1">
        <LeftPanel />
        <Canvas />
        <RightPanel />
      </div>
      <Taskbar />
      <Toast />
    </div>
  );
}
